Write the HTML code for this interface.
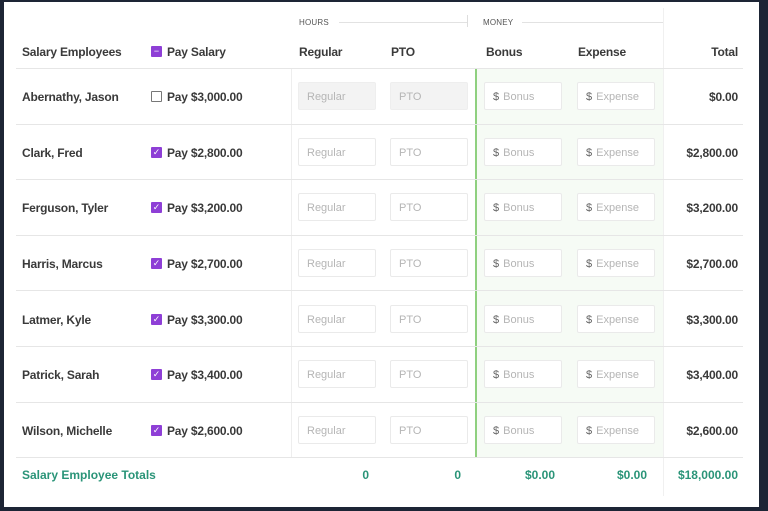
<!DOCTYPE html>
<html><head><meta charset="utf-8"><style>
*{margin:0;padding:0;box-sizing:border-box}
body{width:768px;height:511px;background:#1d2535;position:relative;overflow:hidden;font-family:"Liberation Sans",Arial,sans-serif;color:#333}
#p{position:absolute;left:4px;top:2px;width:755px;height:505px;background:#fff}
.a{position:absolute;white-space:nowrap}
.h{font-weight:bold;font-size:12px;letter-spacing:-0.2px;color:#3a3a3a}
.sm{font-size:8px;color:#555;letter-spacing:0.2px}
.hl{position:absolute;height:1px;background:#e6e6e6}
.vl{position:absolute;width:1px;background:#eee}
.in{position:absolute;width:78px;height:28px;border:1px solid #eaeaea;background:#fff;border-radius:2px;font-size:11px;color:#b5b5b5;padding-left:8px;line-height:28px}
.dis{background:#f3f3f3;border-color:#eee}
.in b{color:#666;font-weight:normal;margin-right:4px}
.cb{position:absolute;width:11px;height:11px;border-radius:1px;background:#8e3fd6;color:#fff;font-size:9px;line-height:11px;text-align:center}
.cb.e{background:#fff;border:1px solid #777}
.tot{font-weight:bold;font-size:12px;color:#2a9478}
</style></head><body>
<div id="p"></div>
<div class="a" style="left:476px;top:68px;width:187px;height:390px;background:#f6fbf5"></div>
<div class="a" style="left:475px;top:68px;width:2px;height:390px;background:#8fd07f"></div>
<div class="vl" style="left:291px;top:68px;height:390px"></div>
<div class="vl" style="left:663px;top:8px;height:488px;background:#f0f0f0"></div>
<div class="a sm" style="left:299px;top:18px">HOURS</div>
<div class="hl" style="left:339px;top:22px;width:128px;background:#e2e2e2"></div>
<div class="vl" style="left:467px;top:15px;height:12px;background:#ddd"></div>
<div class="a sm" style="left:483px;top:18px">MONEY</div>
<div class="hl" style="left:522px;top:22px;width:141px;background:#e2e2e2"></div>
<div class="a h" style="left:22px;top:45px">Salary Employees</div>
<div class="cb" style="left:151px;top:46px">&minus;</div>
<div class="a h" style="left:167px;top:45px">Pay Salary</div>
<div class="a h" style="left:299px;top:45px">Regular</div>
<div class="a h" style="left:391px;top:45px">PTO</div>
<div class="a h" style="left:486px;top:45px">Bonus</div>
<div class="a h" style="left:578px;top:45px">Expense</div>
<div class="a h" style="left:700px;top:45px;width:38px;text-align:right">Total</div>
<div class="hl" style="left:16px;top:68px;width:727px"></div>

<div class="a h" style="left:22px;top:90px">Abernathy, Jason</div>
<div class="cb e" style="left:151px;top:91px"></div>
<div class="a h" style="left:167px;top:90px">Pay $3,000.00</div>
<div class="in dis" style="left:298px;top:82px">Regular</div>
<div class="in dis" style="left:390px;top:82px">PTO</div>
<div class="in" style="left:484px;top:82px"><b>$</b>Bonus</div>
<div class="in" style="left:577px;top:82px"><b>$</b>Expense</div>
<div class="a h" style="left:638px;top:90px;width:100px;text-align:right">$0.00</div>
<div class="hl" style="left:16px;top:124px;width:727px"></div>

<div class="a h" style="left:22px;top:146px">Clark, Fred</div>
<div class="cb" style="left:151px;top:147px">&#10003;</div>
<div class="a h" style="left:167px;top:146px">Pay $2,800.00</div>
<div class="in" style="left:298px;top:138px">Regular</div>
<div class="in" style="left:390px;top:138px">PTO</div>
<div class="in" style="left:484px;top:138px"><b>$</b>Bonus</div>
<div class="in" style="left:577px;top:138px"><b>$</b>Expense</div>
<div class="a h" style="left:638px;top:146px;width:100px;text-align:right">$2,800.00</div>
<div class="hl" style="left:16px;top:179px;width:727px"></div>

<div class="a h" style="left:22px;top:201px">Ferguson, Tyler</div>
<div class="cb" style="left:151px;top:202px">&#10003;</div>
<div class="a h" style="left:167px;top:201px">Pay $3,200.00</div>
<div class="in" style="left:298px;top:193px">Regular</div>
<div class="in" style="left:390px;top:193px">PTO</div>
<div class="in" style="left:484px;top:193px"><b>$</b>Bonus</div>
<div class="in" style="left:577px;top:193px"><b>$</b>Expense</div>
<div class="a h" style="left:638px;top:201px;width:100px;text-align:right">$3,200.00</div>
<div class="hl" style="left:16px;top:235px;width:727px"></div>

<div class="a h" style="left:22px;top:257px">Harris, Marcus</div>
<div class="cb" style="left:151px;top:258px">&#10003;</div>
<div class="a h" style="left:167px;top:257px">Pay $2,700.00</div>
<div class="in" style="left:298px;top:249px">Regular</div>
<div class="in" style="left:390px;top:249px">PTO</div>
<div class="in" style="left:484px;top:249px"><b>$</b>Bonus</div>
<div class="in" style="left:577px;top:249px"><b>$</b>Expense</div>
<div class="a h" style="left:638px;top:257px;width:100px;text-align:right">$2,700.00</div>
<div class="hl" style="left:16px;top:290px;width:727px"></div>

<div class="a h" style="left:22px;top:313px">Latmer, Kyle</div>
<div class="cb" style="left:151px;top:314px">&#10003;</div>
<div class="a h" style="left:167px;top:313px">Pay $3,300.00</div>
<div class="in" style="left:298px;top:305px">Regular</div>
<div class="in" style="left:390px;top:305px">PTO</div>
<div class="in" style="left:484px;top:305px"><b>$</b>Bonus</div>
<div class="in" style="left:577px;top:305px"><b>$</b>Expense</div>
<div class="a h" style="left:638px;top:313px;width:100px;text-align:right">$3,300.00</div>
<div class="hl" style="left:16px;top:346px;width:727px"></div>

<div class="a h" style="left:22px;top:368px">Patrick, Sarah</div>
<div class="cb" style="left:151px;top:369px">&#10003;</div>
<div class="a h" style="left:167px;top:368px">Pay $3,400.00</div>
<div class="in" style="left:298px;top:360px">Regular</div>
<div class="in" style="left:390px;top:360px">PTO</div>
<div class="in" style="left:484px;top:360px"><b>$</b>Bonus</div>
<div class="in" style="left:577px;top:360px"><b>$</b>Expense</div>
<div class="a h" style="left:638px;top:368px;width:100px;text-align:right">$3,400.00</div>
<div class="hl" style="left:16px;top:402px;width:727px"></div>

<div class="a h" style="left:22px;top:424px">Wilson, Michelle</div>
<div class="cb" style="left:151px;top:425px">&#10003;</div>
<div class="a h" style="left:167px;top:424px">Pay $2,600.00</div>
<div class="in" style="left:298px;top:416px">Regular</div>
<div class="in" style="left:390px;top:416px">PTO</div>
<div class="in" style="left:484px;top:416px"><b>$</b>Bonus</div>
<div class="in" style="left:577px;top:416px"><b>$</b>Expense</div>
<div class="a h" style="left:638px;top:424px;width:100px;text-align:right">$2,600.00</div>
<div class="hl" style="left:16px;top:457px;width:727px"></div>

<div class="a tot" style="left:22px;top:468px">Salary Employee Totals</div>
<div class="a tot" style="left:319px;top:468px;width:50px;text-align:right">0</div>
<div class="a tot" style="left:411px;top:468px;width:50px;text-align:right">0</div>
<div class="a tot" style="left:505px;top:468px;width:50px;text-align:right">$0.00</div>
<div class="a tot" style="left:597px;top:468px;width:50px;text-align:right">$0.00</div>
<div class="a tot" style="left:638px;top:468px;width:100px;text-align:right">$18,000.00</div>
</body></html>
